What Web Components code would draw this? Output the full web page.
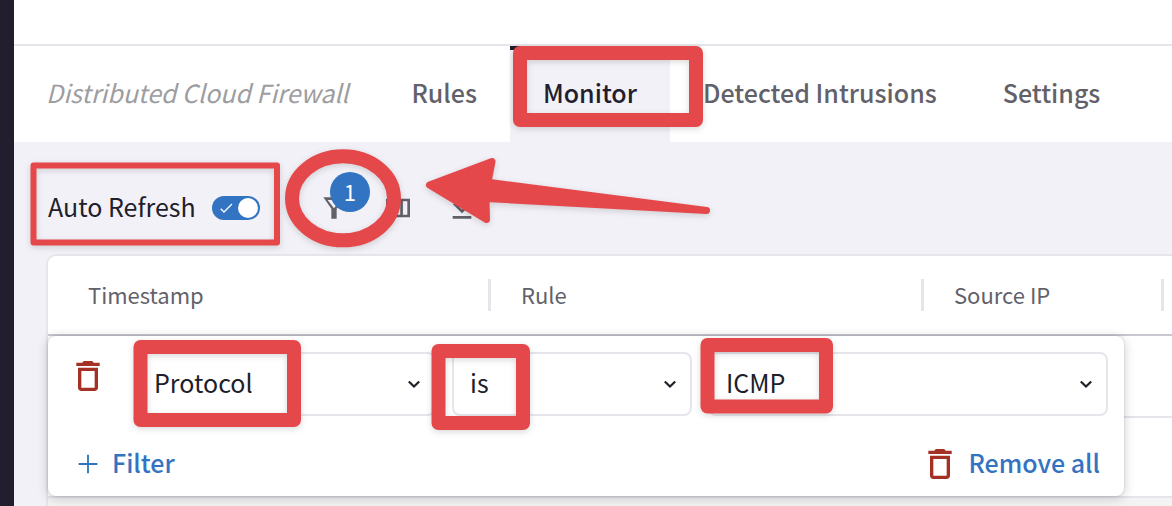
<!DOCTYPE html>
<html lang="en">
<head>
<meta charset="utf-8">
<title>Distributed Cloud Firewall – Monitor</title>
<style>
  html, body { margin: 0; height: 100%; overflow: hidden; }
  body {
    --ink: #20202a; --muted: #62616a; --line: #e6e5eb; --surface: #f2f1f7;
    --blue: #3273c2; --danger: #a53125; --dark: #221e2e;
    font-family: "Noto Sans CJK SC", "Noto Sans", sans-serif;
    font-size: 25px; line-height: 32px; color: var(--ink);
    position: relative;
  }
</style>
</head>
<body>
<app-shell>
  <tab-bar slot="nav" heading="Distributed Cloud Firewall">
    <tab-link>Rules</tab-link>
    <tab-link active>Monitor</tab-link>
    <tab-link>Detected Intrusions</tab-link>
    <tab-link>Settings</tab-link>
  </tab-bar>
  <tool-bar></tool-bar>
  <log-table>
    <filter-panel></filter-panel>
  </log-table>
</app-shell>
<callout-layer></callout-layer>

<script>
function define(name, html, setup) {
  const template = document.createElement('template');
  template.innerHTML = html;
  customElements.define(name, class extends HTMLElement {
    constructor() {
      super();
      this.attachShadow({ mode: 'open' }).append(template.content.cloneNode(true));
    }
    connectedCallback() { if (setup) setup(this, this.shadowRoot); }
  });
}

const ICONS = {
  filter: 'M4 4H20L14 12.5V20H10V12.5ZM7.2 6L12 12.2L16.8 6Z',
  columns: 'M3 5v14h18V5H3zm5.33 12H5V7h3.33v10zm5.34 0h-3.33V7h3.33v10zM19 17h-3.33V7H19v10z',
  download: 'M19 9h-4V3H9v6H5l7 7 7-7zm-8 2V5h2v6h1.17L12 13.17 9.83 11H11zm-6 7h14v2H5z',
  trash: 'M16 9v10H8V9h8m-1.5-6h-5l-1 1H5v2h14V4h-3.5l-1-1zM18 7H6v12c0 1.1.9 2 2 2h8c1.1 0 2-.9 2-2V7z',
  plus: 'M19 12.7h-6.3v6.3h-1.4v-6.3H5v-1.4h6.3V5h1.4v6.3h6.3z'
};
define('ui-icon', `
<style>
  :host { display: block; flex: none; width: 32px; height: 32px; }
  :host([large]) { width: 40px; height: 40px; }
  svg { display: block; width: 100%; height: 100%; }
</style>
<svg viewBox="0 0 24 24" fill="currentColor" fill-rule="evenodd" aria-hidden="true"><path/></svg>`,
(el, root) => root.querySelector('path').setAttribute('d', ICONS[el.getAttribute('name')]));

define('app-shell', `
<style>
  :host { display: flex; height: 100%; }
  aside { flex: none; width: 14px; background: var(--dark); }
  main { flex: 1; min-width: 0; display: flex; flex-direction: column; background: var(--surface); }
  header { background: #fff; padding-top: 44px; }
</style>
<aside></aside>
<main><header><slot name="nav"></slot></header><slot></slot></main>`);

define('tab-bar', `
<style>
  :host { display: flex; align-items: stretch; height: 96px; border-top: 2px solid var(--line); white-space: nowrap; }
  .heading { padding: 30px 30px 32px 32px; font-style: italic; color: #9d9d9f; }
  nav { display: flex; }
</style>
<span class="heading"></span><nav><slot></slot></nav>`,
(el, root) => root.querySelector('.heading').textContent = el.getAttribute('heading'));

define('tab-link', `
<style>
  :host { display: block; }
  a { display: block; box-sizing: border-box; height: 96px; padding: 26px 33px; border-top: 4px solid transparent;
      color: var(--muted); text-decoration: none; font-weight: 500; }
  :host([active]) a { background: var(--surface); border-color: var(--dark); color: var(--dark); }
</style>
<a href="#"><slot></slot></a>`,
(el, root) => { if (el.hasAttribute('active')) root.querySelector('a').setAttribute('aria-current', 'page'); });

define('toggle-switch', `
<style>
  :host { display: block; }
  label { display: flex; align-items: center; gap: 16px; height: 32px; }
  .text { padding-bottom: 4px; }
  .box { display: grid; }
  .box > * { grid-area: 1 / 1; }
  input { appearance: none; margin: 0; width: 48px; height: 24px; border-radius: 12px; background: #9d9d9f; }
  input:checked { background: var(--blue); }
  svg { width: 48px; height: 24px; pointer-events: none; }
</style>
<label><span class="text"><slot></slot></span><span class="box"><input type="checkbox" checked>
<svg viewBox="0 0 48 24"><path d="M8.7 12.7l3.3 3.3 8-8" fill="none" stroke="#fff" stroke-width="1.3"/><circle cx="36" cy="12" r="10" fill="#fff"/></svg></span></label>`);

define('tool-bar', `
<style>
  :host { display: flex; align-items: center; padding: 50px 34px 30px; }
  .actions { display: flex; margin-left: 42px; color: var(--muted); }
  button { position: relative; display: grid; place-items: center; width: 64px; height: 32px; padding: 0; border: 0; background: none; color: inherit; font: inherit; }
  .badge { position: absolute; top: -20px; left: 28px; width: 40px; height: 40px; border-radius: 50%; background: var(--blue);
           color: #fff; font-size: 22px; line-height: 38px; text-align: center; }
</style>
<toggle-switch>Auto Refresh</toggle-switch>
<div class="actions">
  <button type="button" aria-label="Filters"><ui-icon name="filter"></ui-icon><span class="badge">1</span></button>
  <button type="button" aria-label="Columns"><ui-icon name="columns"></ui-icon></button>
  <button type="button" aria-label="Download"><ui-icon name="download"></ui-icon></button>
</div>`);

define('log-table', `
<style>
  :host { flex: 1; display: flex; position: relative; margin-left: 32px; border: solid var(--line); border-width: 2px 0 0 2px;
          border-radius: 10px 0 0 0; background: #fff; }
  table { width: 100%; table-layout: fixed; border-collapse: separate; border-spacing: 0; }
  th { height: 78px; padding: 0; border-bottom: 2px solid #c9c7d1; font-weight: 400; font-size: 22px; line-height: 30px; color: var(--muted); text-align: left; }
  th div { height: 32px; padding-left: 30px; border-right: 3px solid var(--line); }
  th:first-child div { padding-left: 40px; }
  th:last-child div { border: 0; }
  td { height: 78px; padding: 0; border-bottom: 2px solid var(--line); }
  tr:first-child td { height: 80px; }
  tr.selected td { height: auto; border: 0; background: #f3f3f3; }
  .c1 { width: 443px; } .c2 { width: 433px; } .c3 { width: 240px; }
</style>
<table>
  <colgroup><col class="c1"><col class="c2"><col class="c3"><col></colgroup>
  <thead><tr><th><div>Timestamp</div></th><th><div>Rule</div></th><th><div>Source IP</div></th><th><div></div></th></tr></thead>
  <tbody>
    <tr><td></td><td></td><td></td><td></td></tr>
    <tr><td></td><td></td><td></td><td></td></tr>
    <tr class="selected"><td></td><td></td><td></td><td></td></tr>
  </tbody>
</table>
<slot></slot>`);

define('select-box', `
<style>
  :host { display: grid; align-items: center; }
  select, svg { grid-area: 1 / 1; }
  select { appearance: none; box-sizing: border-box; width: 100%; height: 64px; margin: 0; padding: 0 48px 4px 16px;
           border: 2px solid var(--line); border-radius: 8px; background: #fff; color: var(--ink); font: inherit; }
  svg { justify-self: end; margin-right: 14px; width: 16px; height: 16px; pointer-events: none; }
</style>
<select></select>
<svg viewBox="0 0 16 16" aria-hidden="true"><path d="M2.8 5.5L8 10.5L13.2 5.5" fill="none" stroke="#20202a" stroke-width="2.2"/></svg>`,
(el, root) => {
  const select = root.querySelector('select');
  select.setAttribute('aria-label', el.getAttribute('label'));
  select.replaceChildren(new Option(el.getAttribute('value')));
});

define('filter-panel', `
<style>
  :host { display: block; box-sizing: border-box; position: absolute; top: 80px; left: 0; width: calc(100% - 48px); max-width: 1076px;
          padding: 16px 16px 12px; border-radius: 8px; background: #fff; box-shadow: 0 0 2px rgba(0, 0, 0, .2), 0 2px 12px rgba(0, 0, 0, .2); }
  .rule { display: grid; grid-template-columns: 56px 15fr 12fr 20fr; column-gap: 16px; }
  .footer { display: flex; justify-content: space-between; margin-top: 28px; padding: 0 8px; }
  button { display: flex; align-items: center; gap: 8px; height: 40px; padding: 0; border: 0; background: none;
           color: var(--blue); font: inherit; font-weight: 500; }
  button span { padding-bottom: 4px; }
  .remove { padding: 4px; height: 48px; align-self: start; }
  .trash { color: var(--danger); }
</style>
<div class="rule">
  <button type="button" class="remove" aria-label="Remove filter"><ui-icon class="trash" name="trash" large></ui-icon></button>
  <select-box label="Field" value="Protocol"></select-box>
  <select-box label="Operator" value="is"></select-box>
  <select-box label="Value" value="ICMP"></select-box>
</div>
<div class="footer">
  <button type="button"><ui-icon name="plus"></ui-icon><span>Filter</span></button>
  <button type="button"><ui-icon class="trash" name="trash" large></ui-icon><span>Remove all</span></button>
</div>`);

define('callout-layer', `
<style>
  :host { display: block; position: absolute; top: 0; left: 0; pointer-events: none; }
  svg { display: block; filter: drop-shadow(0 2px 3px rgba(0, 0, 0, .15)); }
</style>
<svg width="1172" height="506" fill="none" stroke="#e5484b" stroke-width="14" stroke-linejoin="round" aria-hidden="true">
  <rect x="520" y="53" width="176" height="67"/>
  <rect x="33.5" y="165.5" width="243.5" height="77" stroke-width="6"/>
  <ellipse cx="343" cy="198.3" rx="51" ry="42"/>
  <path d="M429.5 185L492 161.5L488 182.3L706.5 210.5L486 198.5L486.5 219.5Z" fill="#e5484b" stroke-width="7"/>
  <rect x="140.5" y="347" width="153.5" height="73"/>
  <rect x="438.5" y="351" width="84.5" height="72"/>
  <rect x="707.5" y="345" width="118.5" height="61.5"/>
</svg>`);
</script>
</body>
</html>
